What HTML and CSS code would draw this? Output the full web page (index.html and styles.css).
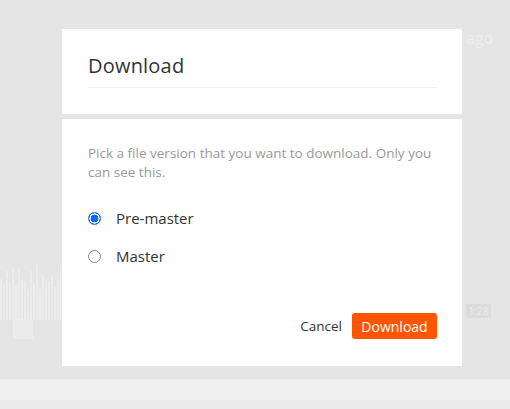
FILE: index.html
```html
<!DOCTYPE html>
<html>
<head>
<meta charset="utf-8">
<link rel="stylesheet" href="styles.css">
</head>
<body>
<div class="page">
  <div class="backdrop">
    <span class="ago">ago</span>
    <div class="wave-left">
      <div class="bars">
        <i style="height:40px"></i><i style="height:34px"></i><i style="height:48px"></i><i style="height:36px"></i><i style="height:52px"></i><i style="height:34px"></i><i style="height:50px"></i><i style="height:40px"></i><i style="height:38px"></i><i style="height:30px"></i><i style="height:48px"></i><i style="height:36px"></i><i style="height:54px"></i><i style="height:30px"></i><i style="height:44px"></i><i style="height:40px"></i><i style="height:38px"></i><i style="height:44px"></i><i style="height:32px"></i><i style="height:40px"></i><i style="height:48px"></i>
      </div>
      <div class="thumb"></div>
    </div>
    <div class="wave-right">
      <div class="time">1:28</div>
    </div>
    <div class="footer-bar"></div>
  </div>

  <div class="modal">
    <div class="panel head">
      <h1 class="title">Download</h1>
    </div>
    <div class="panel body">
      <p class="desc">Pick a file version that you want to download. Only you can see this.</p>
      <div class="options">
        <label class="opt"><span class="radio checked"></span><span>Pre-master</span></label>
        <label class="opt"><span class="radio"></span><span>Master</span></label>
      </div>
      <div class="actions">
        <button class="btn-cancel">Cancel</button>
        <button class="btn-primary">Download</button>
      </div>
    </div>
  </div>
</div>
</body>
</html>
```

FILE: styles.css
```css
* { box-sizing: border-box; }
html, body { margin: 0; padding: 0; }
body {
  width: 510px;
  height: 409px;
  overflow: hidden;
  background: #e5e5e5;
  font-family: "Open Sans", "DejaVu Sans", sans-serif;
}
.page { position: relative; width: 510px; height: 409px; }

.backdrop { position: absolute; inset: 0; }
.ago {
  position: absolute; left: 466px; top: 27px;
  color: #eeeeee; font-size: 16px;
}
.wave-left {
  position: absolute; left: 0; top: 262px; width: 62px; height: 80px;
}
.bars {
  display: flex; align-items: flex-end; gap: 1px;
  height: 58px; border-bottom: 1px solid #e9e9e9;
}
.bars i {
  display: block; width: 2px; background: #ececec;
}
.thumb {
  position: absolute; left: 13px; top: 57px; width: 20px; height: 20px;
  background: #ececec;
}
.wave-right {
  position: absolute; left: 462px; top: 282px; width: 48px; height: 50px;
}
.time {
  position: absolute; left: 4px; top: 22px; width: 25px; height: 14px;
  background: #dcdcdc; color: #ececec; font-size: 10px; line-height: 14px; text-align: center;
}
.footer-bar {
  position: absolute; left: 0; right: 0; top: 379px; bottom: 0;
  background: #f0f0f0; border-bottom: 9px solid #ececec;
}

.modal {
  position: absolute; left: 62px; top: 29px; width: 400px;
  display: flex; flex-direction: column; gap: 5px;
}
.panel { background: #fff; padding: 0 25px 0 26px; }
.head { height: 85px; padding-top: 21px; }
.title {
  margin: 0; font-size: 20px; font-weight: 400; color: #333;
  line-height: 32px; letter-spacing: 0.2px;
  padding-bottom: 5px; border-bottom: 1px solid #eeeeee;
}
.body { height: 247px; padding-top: 25px; display: flex; flex-direction: column; }
.desc {
  margin: 0; font-size: 13.5px; line-height: 19px; color: #999; width: 345px;
}
.options { display: flex; flex-direction: column; gap: 17px; margin-top: 25px; }
.opt {
  display: flex; align-items: center; gap: 15px;
  font-size: 15px; color: #333; line-height: 22px;
}
.opt + .opt { margin-top: -1px; }
.radio {
  width: 13px; height: 13px; border-radius: 50%;
  border: 1px solid #8a8a8a; background: #fff; flex: none;
}
.radio.checked {
  border: 1px solid #1a6fe8;
  background: radial-gradient(circle, #0a6bf5 0 3.6px, #fff 4.2px 5px, #1a6fe8 5.2px);
}
.actions {
  display: flex; justify-content: flex-end; align-items: center; gap: 10px;
  margin-top: 46px;
}
.btn-cancel {
  border: 0; background: none; padding: 0; font-family: inherit;
  font-size: 13.5px; color: #333;
}
.btn-primary {
  border: 0; background: #ff5500; color: #fff; font-family: inherit;
  font-size: 14px; height: 26px; width: 85px; border-radius: 3px; padding: 0;
}
```
